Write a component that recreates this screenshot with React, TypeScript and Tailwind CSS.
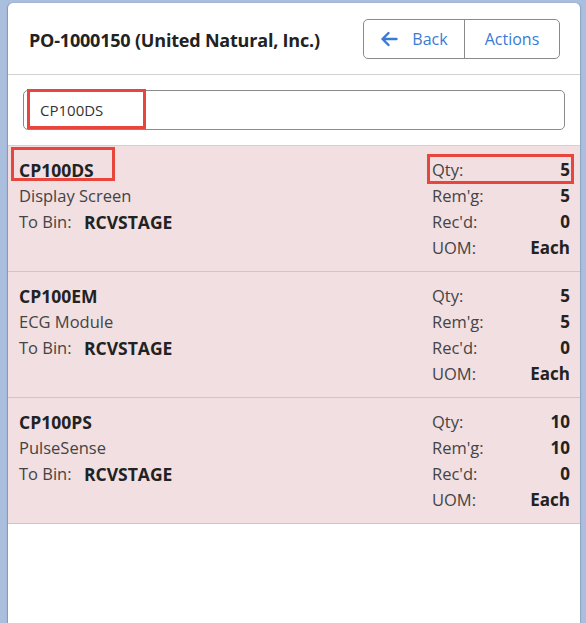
import React from "react";

type Line = {
  code: string;
  name: string;
  bin: string;
  qty: string;
  rem: string;
  rec: string;
  uom: string;
};

const lines: Line[] = [
  { code: "CP100DS", name: "Display Screen", bin: "RCVSTAGE", qty: "5", rem: "5", rec: "0", uom: "Each" },
  { code: "CP100EM", name: "ECG Module", bin: "RCVSTAGE", qty: "5", rem: "5", rec: "0", uom: "Each" },
  { code: "CP100PS", name: "PulseSense", bin: "RCVSTAGE", qty: "10", rem: "10", rec: "0", uom: "Each" },
];

function BackArrow() {
  return (
    <svg width="18" height="16" viewBox="0 0 18 16" fill="none" className="mr-[14px]">
      <path d="M16.5 8H2.5M8.5 2L2.5 8L8.5 14" stroke="#3a7ad6" strokeWidth="2.4" strokeLinecap="round" strokeLinejoin="round" />
    </svg>
  );
}

function Row({ label, value }: { label: string; value: string }) {
  return (
    <div className="flex h-[26px] items-center justify-between">
      <span className="text-[#444]">{label}</span>
      <span className="text-[17px] font-bold text-[#222]">{value}</span>
    </div>
  );
}

function Item({ line, first }: { line: Line; first: boolean }) {
  return (
    <div className="relative flex justify-between border-b border-[#cfc6c8] bg-[#f1dfe1] pb-[10px] pl-[11px] pr-[10px] pt-[11px]">
      <div className="flex flex-col">
        <div className="flex h-[26px] items-center text-[17.5px] font-bold text-[#222]">{line.code}</div>
        <div className="flex h-[26px] items-center text-[#444]">{line.name}</div>
        <div className="flex h-[26px] items-center text-[#444]">
          <span className="w-[65px]">To Bin:</span>
          <span className="text-[17.5px] font-bold text-[#222]">{line.bin}</span>
        </div>
      </div>
      <div className="flex w-[138px] flex-col">
        <Row label="Qty:" value={line.qty} />
        <Row label="Rem'g:" value={line.rem} />
        <Row label="Rec'd:" value={line.rec} />
        <Row label="UOM:" value={line.uom} />
      </div>
      {first && (
        <>
          <div className="pointer-events-none absolute left-[3px] top-[1px] h-[34px] w-[104px] border-[3px] border-[#e8453c]" />
          <div className="pointer-events-none absolute right-[6px] top-[8px] h-[30px] w-[147px] border-[3px] border-[#e8453c]" />
        </>
      )}
    </div>
  );
}

export default function App() {
  return (
    <div
      className="min-h-[623px] bg-[#aabedd] pl-2 pr-[6px] pt-[3px] text-[16.5px]"
      style={{ fontFamily: '"Open Sans", "Noto Sans", sans-serif' }}
    >
      <div className="min-h-[620px] rounded-t-[5px] bg-white shadow-[-1px_0_1px_rgba(60,80,110,0.35),1px_0_1px_rgba(60,80,110,0.25)]">
        <div className="flex h-[72px] items-center justify-between border-b border-[#d2d2d2] pl-[21px] pr-[20px]">
          <div className="pt-[3px] text-[18px] font-bold tracking-[-0.2px] text-[#222]">PO-1000150 (United Natural, Inc.)</div>
          <div className="flex h-[40px] overflow-hidden rounded-[5px] border border-[#8a8a8a] text-[16px] text-[#3a7ad6]">
            <button className="flex w-[101px] items-center justify-center border-r border-[#8a8a8a]">
              <BackArrow />
              Back
            </button>
            <button className="flex w-[94px] items-center justify-center">Actions</button>
          </div>
        </div>
        <div className="relative border-b border-[#d2d2d2] px-[15px] pb-[15px] pt-[15px]">
          <div className="flex h-[40px] items-center rounded-[5px] border border-[#8a8a8a] pl-[16px] text-[15px] text-[#333]">
            CP100DS
          </div>
          <div className="pointer-events-none absolute left-[19px] top-[14px] h-[40px] w-[119px] border-[3px] border-[#e8453c]" />
        </div>
        <div>
          {lines.map((l, i) => (
            <Item key={l.code} line={l} first={i === 0} />
          ))}
        </div>
      </div>
    </div>
  );
}
